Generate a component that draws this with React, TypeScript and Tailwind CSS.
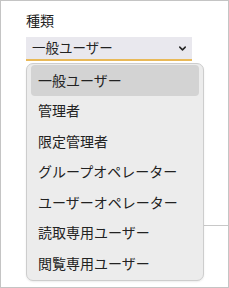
import { ChevronDown } from "lucide-react";

const OPTIONS = [
  "一般ユーザー",
  "管理者",
  "限定管理者",
  "グループオペレーター",
  "ユーザーオペレーター",
  "読取専用ユーザー",
  "閲覧専用ユーザー",
];

export default function App() {
  return (
    <div
      className="relative h-[288px] w-[229px] overflow-hidden border border-[#c4c4c4] bg-white text-[#222]"
      style={{ fontFamily: '"Noto Sans CJK JP", "Noto Sans", sans-serif' }}
    >
      {/* panel edge hidden behind the menu */}
      <div className="absolute left-[200px] right-0 top-[224px] h-px bg-[#c8c8c8]" />

      <div className="pl-[25px] pt-[10px]">
        <div className="text-[14px] leading-[18px]">種類</div>
        <div className="mt-[8px] flex h-[24px] w-[166px] items-center justify-between border-b-2 border-[#e9b958] bg-[#e9e8ee] pl-[6px] pr-[4px]">
          <span className="text-[13.5px] leading-none">一般ユーザー</span>
          <ChevronDown size={11} strokeWidth={3.2} className="text-[#222]" />
        </div>

        {/* open menu */}
        <div className="relative z-10 mt-[2px] w-[178px] rounded-[7px] border border-[#cdcdcd] bg-[#ececec] px-[4px] pb-[1px] pt-[1px] shadow-[0_1px_2px_rgba(0,0,0,0.08)]">
          {OPTIONS.map((o, i) => (
            <div
              key={o}
              className={`flex h-[30.5px] items-center rounded-[4px] pl-[7px] text-[14px] ${
                i === 0 ? "bg-[#d3d3d3]" : ""
              }`}
            >
              {o}
            </div>
          ))}
        </div>
      </div>
    </div>
  );
}
